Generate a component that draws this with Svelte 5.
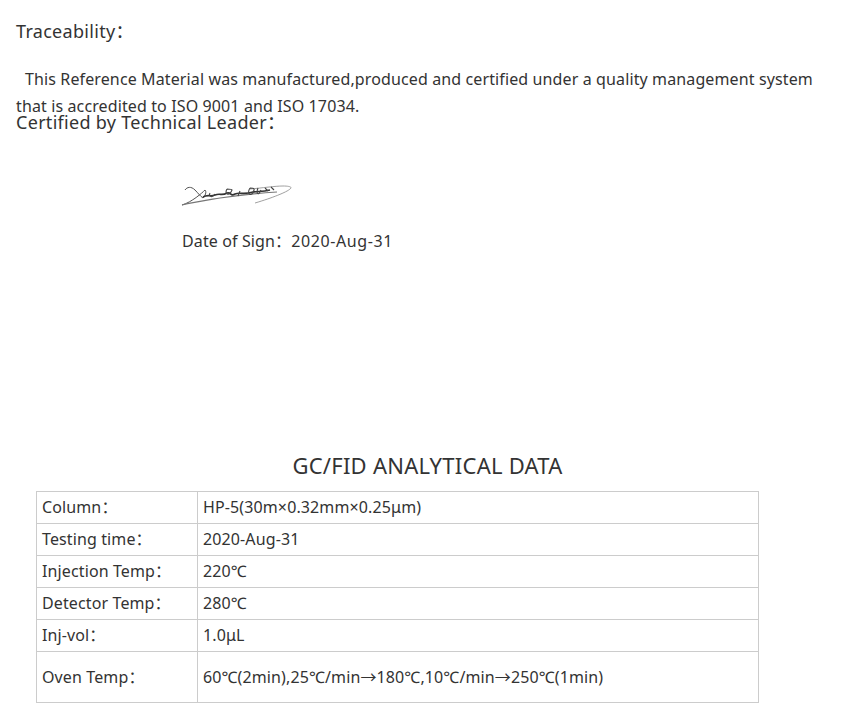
<script>
  const colon = "\uFF1A";
  const rows = [
    ["Column" + colon, "HP-5(30m×0.32mm×0.25μm)"],
    ["Testing time" + colon, "2020-Aug-31"],
    ["Injection Temp" + colon, "220℃"],
    ["Detector Temp" + colon, "280℃"],
    ["Inj-vol" + colon, "1.0μL"],
    ["Oven Temp" + colon, "60℃(2min),25℃/min→180℃,10℃/min→250℃(1min)"],
  ];
</script>

<main>
  <h3 class="trace">Traceability{colon}</h3>
  <p class="intro">
    <span class="lead">This Reference Material was manufactured,produced and certified under a quality management system</span>
    that is accredited to ISO 9001 and ISO 17034.
  </p>
  <h3 class="cert">Certified by Technical Leader{colon}</h3>

  <div class="sign">
    <svg width="112" height="24" viewBox="0 0 112 24" fill="none" stroke="#333">
      <!-- left loop -->
      <path d="M5 5C7 2 11 1 15 5C18 8 20 11 23 13C25 11 27 7 25 5C22 8 12 17 2 20" stroke-width="1" stroke="#555" />
      <!-- long under stroke and hook -->
      <path d="M2 20C14 17 28 15 40 13C60 10 80 8 97 7" stroke-width="1.2" stroke="#777" />
      <path d="M70 4C82 3 95 1 103 1C109 1 113 2 110 4C107 7 92 13 75 18" stroke-width="0.8" stroke="#888" />
      <!-- scribble in the middle -->
      <path d="M23 12C28 9 30 12 35 10C40 8 42 11 47 8C52 7 50 12 55 9C60 7 64 10 73 7C78 6 82 7 90 5" stroke-width="1.6" stroke="#333" />
      <path d="M30 8C28 12 33 13 35 9M47 4C44 9 49 12 52 5C52 4 47 4 47 4M60 6L58 11M70 3C66 9 72 13 74 5C75 3 71 3 70 3M78 3C76 8 78 12 81 5M85 3L88 6M91 2L94 5" stroke-width="1.1" stroke="#444" />
    </svg>
    <p class="date">Date of Sign{colon}<span class="day">2020-Aug-31</span></p>
  </div>

  <h2>GC/FID ANALYTICAL DATA</h2>

  <table>
    <tbody>
      {#each rows as row, i}
        <tr class:tall={i === rows.length - 1}>
          <td class="name">{row[0]}</td>
          <td>{row[1]}</td>
        </tr>
      {/each}
    </tbody>
  </table>
</main>

<style>
  :global(body) {
    background: #fff;
  }
  main {
    width: 855px;
    height: 714px;
    overflow: hidden;
    color: #333;
    font-family: "Noto Sans", "Noto Sans CJK SC", sans-serif;
    font-size: 16px;
    letter-spacing: 0.12px;
  }
  h3 {
    margin: 0;
    font-size: 18px;
    font-weight: 400;
    line-height: 24px;
    letter-spacing: 0.3px;
  }
  .trace {
    padding: 19px 0 0 16px;
  }
  .intro {
    margin: 23px 0 0;
    padding-left: 16px;
    width: 810px;
    height: 44px;
    line-height: 27px;
  }
  .lead {
    padding-left: 9px;
    white-space: nowrap;
  }
  .cert {
    padding-left: 16px;
  }
  .sign {
    margin: 51px 0 0 180px;
  }
  .sign svg {
    display: block;
  }
  .date {
    margin: 20px 0 0 2px;
    line-height: 24px;
  }
  .day {
    letter-spacing: 0.6px;
  }
  h2 {
    margin: 196px 0 0;
    text-align: center;
    font-size: 22px;
    font-weight: 400;
    line-height: 32px;
    letter-spacing: 0.25px;
  }
  table {
    margin: 10px 0 0 36px;
    width: 723px;
    border-collapse: collapse;
    table-layout: fixed;
  }
  td {
    height: 30px;
    padding: 0 5px 1px;
    border: 1px solid #ccc;
    line-height: 22px;
  }
  .name {
    width: 150px;
  }
  .tall td {
    height: 49px;
  }
</style>
